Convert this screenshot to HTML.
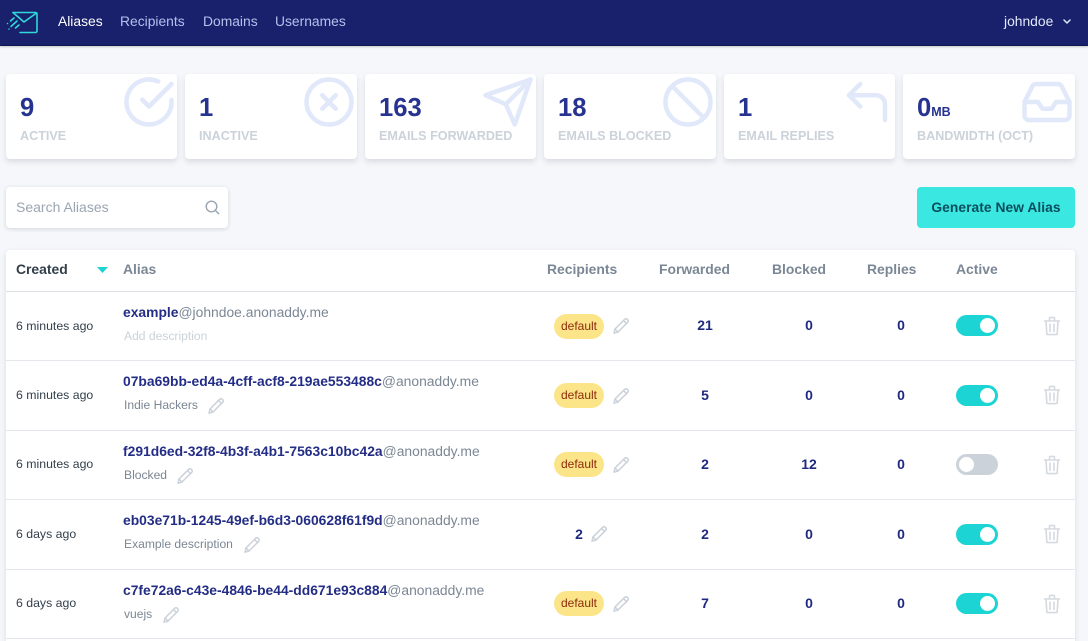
<!DOCTYPE html>
<html lang="en">
<head>
<meta charset="utf-8">
<title>Aliases</title>
<style>
*{box-sizing:border-box}
html,body{margin:0;padding:0;width:1088px;height:641px;overflow:hidden}
body{position:relative;background:#f5f7fa;font-family:"Liberation Sans",sans-serif;color:#323f4b}
.a{position:absolute;white-space:nowrap}
.nav{position:absolute;left:0;top:0;width:1088px;height:46px;background:#19216c;border-bottom:1px solid #0f1654;box-shadow:0 1px 2px rgba(0,0,0,.2)}
.nav .a{top:13px;font-size:13.85px;line-height:16px;color:#b3c1ed}
.card{position:absolute;top:74px;height:85px;background:#fff;border-radius:4px;box-shadow:0 3px 6px rgba(50,60,90,.14);overflow:hidden}
.card .n{position:absolute;left:14px;top:19px;font-size:25.6px;line-height:30px;font-weight:700;color:#263390}
.card .n small{font-size:12.5px}
.card .l{position:absolute;left:14px;top:54px;font-size:12.6px;line-height:16px;font-weight:700;color:#cbd2d9;white-space:nowrap}
.card svg{position:absolute;right:1px;top:1px;width:54px;height:54px;fill:none;stroke:#e0e8f9;stroke-width:2;stroke-linecap:round;stroke-linejoin:round}
.search{position:absolute;left:6px;top:187px;width:222px;height:41px;background:#fff;border-radius:4px;box-shadow:0 1px 4px rgba(50,60,90,.18)}
.btn{position:absolute;left:917px;top:187px;width:158px;height:41px;background:#3ae7e1;border-radius:4px;font-size:13.8px;font-weight:700;line-height:41px;text-align:center;color:#0a4d5c;letter-spacing:.05px}
.table{position:absolute;left:6px;top:250px;width:1069px;height:391px;background:#fff;box-shadow:0 2px 6px rgba(50,60,90,.14);border-radius:4px 4px 0 0}
.h{position:absolute;top:261px;font-size:13.9px;line-height:16px;font-weight:700;color:#7b8794;white-space:nowrap}
.hr{position:absolute;left:6px;width:1069px;height:1px;background:#e4e7eb}
.t{position:absolute;left:16px;font-size:12.3px;line-height:14px;color:#323f4b;white-space:nowrap}
.al{position:absolute;left:123px;font-size:13.86px;line-height:16px;color:#7b8794;white-space:nowrap}
.al b{color:#232d85}
.d{position:absolute;left:124px;font-size:12.1px;line-height:14px;color:#7b8794;white-space:nowrap}
.pill{position:absolute;left:554px;width:50px;height:25px;border-radius:13px;background:#fce588;color:#8d2b0b;font-size:12px;line-height:25px;text-align:center}
.num{position:absolute;width:40px;font-size:14px;line-height:16px;font-weight:700;color:#1f2980;text-align:center}
.tog{position:absolute;left:956px;width:42px;height:21px;border-radius:11px;background:#1cd4d4}
.tog i{position:absolute;right:3px;top:3px;width:15px;height:15px;border-radius:50%;background:#fff}
.tog.off{background:#cbd2d9}
.tog.off i{left:3px;right:auto}
.pen,.tr{position:absolute;fill:none;stroke:#cbd2d9;stroke-linecap:round;stroke-linejoin:round}
.pen{width:18px;height:18px;stroke-width:1.5}
.tr{left:1043px;width:18px;height:20px;stroke-width:1.6;stroke:#d5dae0}
</style>
</head>
<body>
<svg width="0" height="0" style="position:absolute">
<symbol id="p" viewBox="0 0 18 18"><path d="M2 16.2l1-4.2L12.8 2.2a1.6 1.6 0 0 1 2.3 0l.7.7a1.6 1.6 0 0 1 0 2.3L6 15z"/><path d="M3 12l3 3M11.5 3.5l3 3"/></symbol>
<symbol id="b" viewBox="0 0 18 20"><path d="M1.5 5h15M6.5 4.5V2.2c0-.5.3-.8.8-.8h3.4c.5 0 .8.3.8.8v2.3"/><path d="M3 5l.8 12.6c0 .6.5 1 1 1h8.4c.5 0 1-.4 1-1L15 5"/><path d="M7 8v7.5M11 8v7.5"/></symbol>
</svg>

<div class="nav">
<svg style="position:absolute;left:6px;top:11px" width="32" height="23" viewBox="0 0 32 23" fill="none" stroke="#2ed9d9" stroke-width="1.6" stroke-linecap="round" stroke-linejoin="round"><path d="M7 1.500h22.500a1.500 1.500 0 0 1 1.500 1.500v17a1.500 1.500 0 0 1-1.500 1.500H14"/><path d="M7 1.500l11 9.500L30.500 2"/><path d="M8 7l-3.500 3M11 10l-6 5.500M13 14l-3.500 3M1.500 12.500l0 0M3 18l0 0"/></svg>
<span class="a" style="left:58px;color:#fff">Aliases</span>
<span class="a" style="left:120px">Recipients</span>
<span class="a" style="left:203px">Domains</span>
<span class="a" style="left:275px">Usernames</span>
<span class="a" style="left:1004px;color:#e0e8f9">johndoe</span>
<svg style="position:absolute;left:1062px;top:18px" width="10" height="7" viewBox="0 0 10 7" fill="none" stroke="#e0e8f9" stroke-width="1.5" stroke-linecap="round" stroke-linejoin="round"><path d="M2 2l3 3 3-3"/></svg>
</div>

<div class="card" style="left:6px;width:171px"><div class="n">9</div><div class="l">ACTIVE</div>
<svg viewBox="0 0 24 24"><path d="M22 11.080V12a10 10 0 1 1-5.930-9.140"/><path d="M22 4L12 14.010l-3-3"/></svg></div>
<div class="card" style="left:185px;width:172px"><div class="n">1</div><div class="l">INACTIVE</div>
<svg viewBox="0 0 24 24"><circle cx="12" cy="12" r="10"/><path d="M15 9l-6 6M9 9l6 6"/></svg></div>
<div class="card" style="left:365px;width:171px"><div class="n">163</div><div class="l">EMAILS FORWARDED</div>
<svg viewBox="0 0 24 24"><path d="M22 2L11 13"/><path d="M22 2l-7 20-4-9-9-4z"/></svg></div>
<div class="card" style="left:544px;width:172px"><div class="n">18</div><div class="l">EMAILS BLOCKED</div>
<svg viewBox="0 0 24 24"><circle cx="12" cy="12" r="10"/><path d="M4.930 4.930l14.140 14.140"/></svg></div>
<div class="card" style="left:724px;width:171px"><div class="n">1</div><div class="l">EMAIL REPLIES</div>
<svg viewBox="0 0 24 24"><path d="M9 14L4 9l5-5"/><path d="M20 20v-7a4 4 0 0 0-4-4H4"/></svg></div>
<div class="card" style="left:903px;width:172px"><div class="n">0<small>MB</small></div><div class="l">BANDWIDTH (OCT)</div>
<svg viewBox="0 0 24 24"><path d="M22 12h-6l-2 3h-4l-2-3H2"/><path d="M5.450 5.110L2 12v6a2 2 0 0 0 2 2h16a2 2 0 0 0 2-2v-6l-3.450-6.890A2 2 0 0 0 16.760 4H7.240a2 2 0 0 0-1.790 1.110z"/></svg></div>

<div class="search">
<span class="a" style="left:10px;top:12px;font-size:14px;line-height:16px;color:#9aa5b1">Search Aliases</span>
<svg style="position:absolute;left:199px;top:13px" width="15" height="15" viewBox="0 0 15 15" fill="none" stroke="#9aa5b1" stroke-width="1.4" stroke-linecap="round"><circle cx="6.500" cy="6.500" r="5.300"/><path d="M10.500 10.500l3.200 3.200"/></svg>
</div>
<div class="btn">Generate New Alias</div>

<div class="table"></div>
<div class="h" style="left:16px;color:#323f4b">Created</div>
<svg style="position:absolute;left:97px;top:267px" width="11" height="6" viewBox="0 0 11 6"><path d="M0 0h11L5.500 6z" fill="#1cd4d4"/></svg>
<div class="h" style="left:123px">Alias</div>
<div class="h" style="left:547px">Recipients</div>
<div class="h" style="left:659px">Forwarded</div>
<div class="h" style="left:772px">Blocked</div>
<div class="h" style="left:867px">Replies</div>
<div class="h" style="left:956px">Active</div>
<div class="hr" style="top:291px;background:#dde1e6"></div>
<div class="hr" style="top:360px"></div>
<div class="hr" style="top:430px"></div>
<div class="hr" style="top:499px"></div>
<div class="hr" style="top:569px"></div>
<div class="hr" style="top:638px"></div>

<!-- row 1 -->
<div class="t" style="top:319px">6 minutes ago</div>
<div class="al" style="top:304px"><b>example</b>@johndoe.anonaddy.me</div>
<div class="d" style="top:329px;color:#cbd2d9">Add description</div>
<div class="pill" style="top:314px">default</div>
<svg class="pen" style="left:612px;top:317px"><use href="#p"/></svg>
<div class="num" style="left:685px;top:317px">21</div>
<div class="num" style="left:789px;top:317px">0</div>
<div class="num" style="left:881px;top:317px">0</div>
<div class="tog" style="top:315px"><i></i></div>
<svg class="tr" style="top:316px"><use href="#b"/></svg>

<!-- row 2 -->
<div class="t" style="top:388px">6 minutes ago</div>
<div class="al" style="top:373px"><b>07ba69bb-ed4a-4cff-acf8-219ae553488c</b>@anonaddy.me</div>
<div class="d" style="top:398px">Indie Hackers</div>
<svg class="pen" style="left:207px;top:397px"><use href="#p"/></svg>
<div class="pill" style="top:383px">default</div>
<svg class="pen" style="left:612px;top:387px"><use href="#p"/></svg>
<div class="num" style="left:685px;top:387px">5</div>
<div class="num" style="left:789px;top:387px">0</div>
<div class="num" style="left:881px;top:387px">0</div>
<div class="tog" style="top:385px"><i></i></div>
<svg class="tr" style="top:385px"><use href="#b"/></svg>

<!-- row 3 -->
<div class="t" style="top:457px">6 minutes ago</div>
<div class="al" style="top:443px"><b>f291d6ed-32f8-4b3f-a4b1-7563c10bc42a</b>@anonaddy.me</div>
<div class="d" style="top:468px">Blocked</div>
<svg class="pen" style="left:176px;top:467px"><use href="#p"/></svg>
<div class="pill" style="top:452px">default</div>
<svg class="pen" style="left:612px;top:456px"><use href="#p"/></svg>
<div class="num" style="left:685px;top:456px">2</div>
<div class="num" style="left:789px;top:456px">12</div>
<div class="num" style="left:881px;top:456px">0</div>
<div class="tog off" style="top:454px"><i></i></div>
<svg class="tr" style="top:455px"><use href="#b"/></svg>

<!-- row 4 -->
<div class="t" style="top:527px">6 days ago</div>
<div class="al" style="top:512px"><b>eb03e71b-1245-49ef-b6d3-060628f61f9d</b>@anonaddy.me</div>
<div class="d" style="top:537px">Example description</div>
<svg class="pen" style="left:243px;top:536px"><use href="#p"/></svg>
<div class="num" style="left:559px;top:526px">2</div>
<svg class="pen" style="left:590px;top:525px"><use href="#p"/></svg>
<div class="num" style="left:685px;top:526px">2</div>
<div class="num" style="left:789px;top:526px">0</div>
<div class="num" style="left:881px;top:526px">0</div>
<div class="tog" style="top:524px"><i></i></div>
<svg class="tr" style="top:524px"><use href="#b"/></svg>

<!-- row 5 -->
<div class="t" style="top:596px">6 days ago</div>
<div class="al" style="top:582px"><b>c7fe72a6-c43e-4846-be44-dd671e93c884</b>@anonaddy.me</div>
<div class="d" style="top:607px">vuejs</div>
<svg class="pen" style="left:162px;top:606px"><use href="#p"/></svg>
<div class="pill" style="top:591px">default</div>
<svg class="pen" style="left:612px;top:595px"><use href="#p"/></svg>
<div class="num" style="left:685px;top:595px">7</div>
<div class="num" style="left:789px;top:595px">0</div>
<div class="num" style="left:881px;top:595px">0</div>
<div class="tog" style="top:593px"><i></i></div>
<svg class="tr" style="top:594px"><use href="#b"/></svg>
</body>
</html>
